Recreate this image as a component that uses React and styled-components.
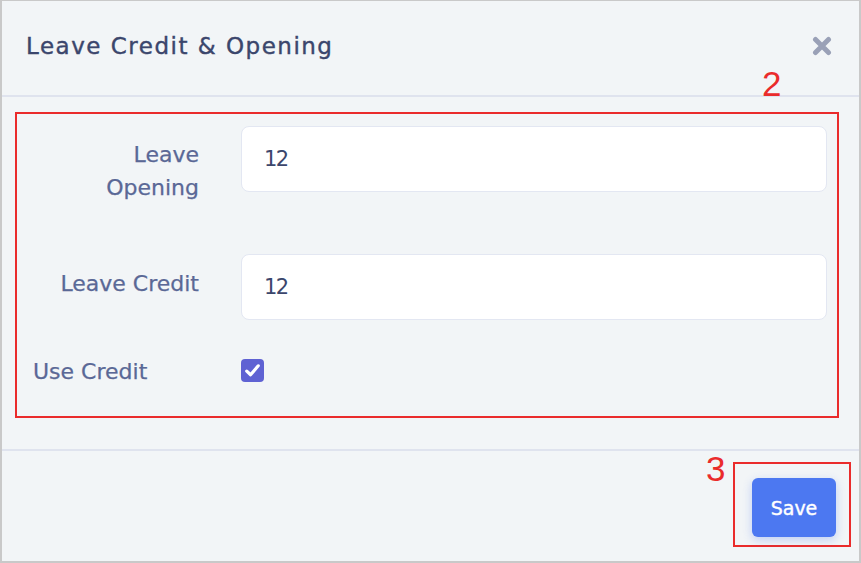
import React from "react";
import styled, { createGlobalStyle } from "styled-components";

const GlobalStyle = createGlobalStyle`
  html, body {
    margin: 0;
    padding: 0;
    background: #f2f5f7;
  }
  * {
    box-sizing: border-box;
  }
`;

const Frame = styled.div`
  width: 861px;
  height: 563px;
  display: flex;
  flex-direction: column;
  background: #f2f5f7;
  border-style: solid;
  border-color: #c9c9c9;
  border-width: 1px 2px 2px 2px;
  font-family: "DejaVu Sans", "Noto Sans", sans-serif;
`;

const Header = styled.div`
  height: 96px;
  flex-shrink: 0;
  display: flex;
  align-items: center;
  justify-content: space-between;
  padding: 0 26px 4px 24px;
  border-bottom: 2px solid #dfe3ee;
`;

const Title = styled.h2`
  margin: 0;
  font-size: 23px;
  font-weight: normal;
  color: #3b466c;
  letter-spacing: 1.5px;
  -webkit-text-stroke: 0.4px #3b466c;
`;

const CloseButton = styled.button`
  border: none;
  background: none;
  padding: 0;
  width: 22px;
  height: 22px;
  display: flex;
  align-items: center;
  justify-content: center;
  cursor: pointer;
`;

const Body = styled.div`
  padding: 15px 20px 31px 13px;
  border-bottom: 2px solid #dfe3ee;
`;

const Marked = styled.div`
  position: relative;
  border: 2px solid #ea2b2b;
`;

const Mark = styled.span`
  position: absolute;
  left: ${(p) => p.left};
  top: ${(p) => p.top};
  font-family: "Liberation Sans", Arial, sans-serif;
  font-size: 35px;
  line-height: 1;
  color: #ea2b2b;
`;

const Form = styled.div`
  display: flex;
  flex-direction: column;
  padding: 12px 10px 28px 16px;
`;

const Row = styled.div`
  display: grid;
  grid-template-columns: 166px 1fr;
  column-gap: 42px;
  align-items: ${(p) => p.align || "center"};
  height: ${(p) => (p.tall ? "66px" : "auto")};
  margin-top: ${(p) => p.gap || 0}px;
`;

const Label = styled.label`
  font-size: 22px;
  line-height: 33px;
  color: #5a6896;
  -webkit-text-stroke: 0.25px #5a6896;
  white-space: nowrap;
  text-align: ${(p) => (p.left ? "left" : "right")};
  padding-top: ${(p) => p.pad || 0}px;
  padding-bottom: ${(p) => p.padBottom || 0}px;
`;

const Input = styled.input`
  width: 100%;
  height: 66px;
  border: 1px solid #e3e7f2;
  border-radius: 8px;
  background: #fff;
  padding: 0 22px;
  font-family: "DejaVu Sans", sans-serif;
  font-size: 21px;
  letter-spacing: -1.5px;
  color: #3b466c;
  outline: none;
`;

const Check = styled.span`
  width: 23px;
  height: 23px;
  border-radius: 4px;
  background: #5f62d3;
  display: flex;
  align-items: center;
  justify-content: center;
  margin-top: -3px;
`;

const Footer = styled.div`
  flex: 1;
  display: flex;
  justify-content: flex-end;
  align-items: flex-start;
  padding: 11px 8px 0 0;
`;

const SaveMark = styled.div`
  position: relative;
  display: flex;
  padding: 14px 13px 8px 17px;
  border: 2px solid #ea2b2b;
`;

const SaveButton = styled.button`
  width: 84px;
  height: 59px;
  border: none;
  border-radius: 6px;
  background: #4c78f1;
  color: #fff;
  font-family: "DejaVu Sans", sans-serif;
  font-size: 19px;
  -webkit-text-stroke: 0.4px #fff;
  box-shadow: 0 3px 10px rgba(76, 120, 241, 0.3);
  cursor: pointer;
`;

export default function App() {
  return (
    <>
      <GlobalStyle />
      <Frame>
        <Header>
          <Title>Leave Credit &amp; Opening</Title>
          <CloseButton aria-label="close">
            <svg width="20" height="20" viewBox="0 0 20 20">
              <path
                d="M3.5 3.5 L16.5 16.5 M16.5 3.5 L3.5 16.5"
                stroke="#9aa1b7"
                strokeWidth="5"
                strokeLinecap="round"
              />
            </svg>
          </CloseButton>
        </Header>
        <Body>
          <Marked>
            <Mark left="745px" top="-48px">2</Mark>
            <Form>
              <Row align="start" tall>
                <Label pad={12}>
                  Leave
                  <br />
                  Opening
                </Label>
                <Input defaultValue="12" />
              </Row>
              <Row gap={62}>
                <Label padBottom={8}>Leave Credit</Label>
                <Input defaultValue="12" />
              </Row>
              <Row gap={35}>
                <Label left>Use Credit</Label>
                <Check>
                  <svg width="17" height="17" viewBox="0 0 16 16">
                    <path
                      d="M2.6 8.6 L6.2 12 L13.4 3.6"
                      fill="none"
                      stroke="#fff"
                      strokeWidth="3"
                      strokeLinecap="round"
                      strokeLinejoin="round"
                    />
                  </svg>
                </Check>
              </Row>
            </Form>
          </Marked>
        </Body>
        <Footer>
          <SaveMark>
            <Mark left="-29px" top="-13px">3</Mark>
            <SaveButton>Save</SaveButton>
          </SaveMark>
        </Footer>
      </Frame>
    </>
  );
}
